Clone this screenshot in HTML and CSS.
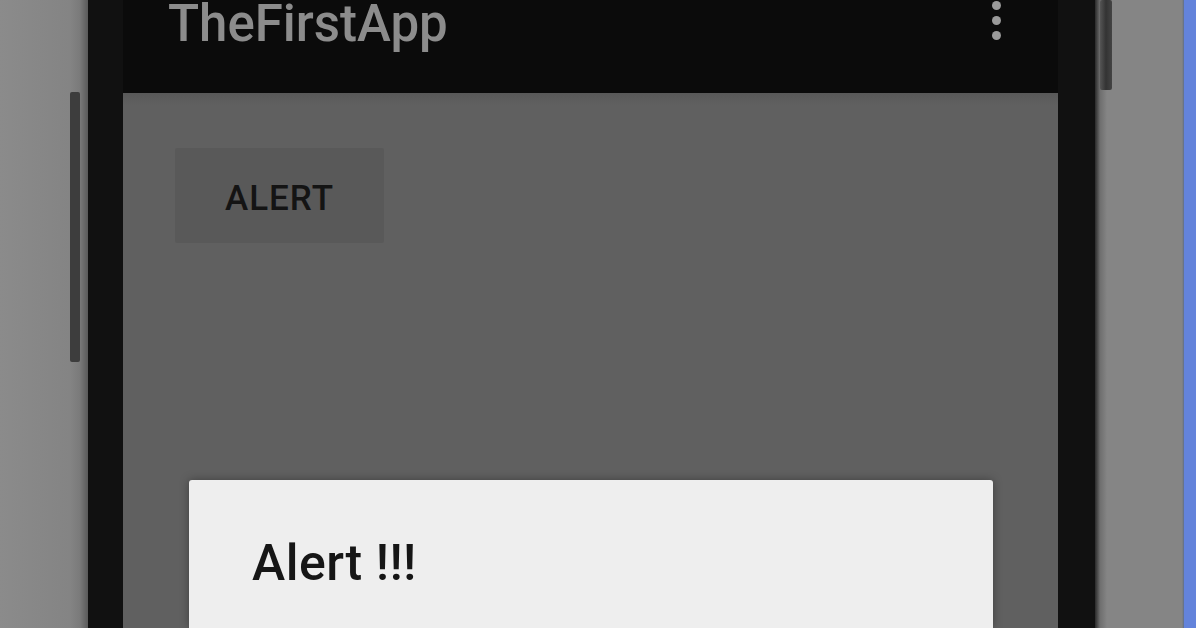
FILE: index.html
```html
<!DOCTYPE html>
<html>
	<head>
		<meta charset="UTF-8">
		<meta name=viewport content="width=device-width,initial-scale=1.0">
		<title>TheFirstApp</title>
		<link rel="stylesheet" href="styles.css">
	</head>
	<body>
		<div class="desk">
			<div class="side side-left">
				<div class="key key-left"></div>
			</div>
			<div class="phone">
				<header class="appbar">
					<div class="title">TheFirstApp</div>
					<div class="menu">
						<span></span>
						<span></span>
						<span></span>
					</div>
				</header>
				<main class="screen">
					<button class="btn">ALERT</button>
					<div class="dialog">
						<div class="dialog-title">Alert !!!</div>
					</div>
				</main>
			</div>
			<div class="side side-right">
				<div class="key key-right"></div>
			</div>
			<div class="edge"></div>
		</div>
	</body>
</html>
```

FILE: styles.css
```css
*{
	padding: 0;
	margin: 0;
	box-sizing: border-box;
}
html, body{
	width: 100%;
	height: 100%;
	overflow: hidden;
}
body{
	background: #898989;
	font-family: Roboto, "Liberation Sans", sans-serif;
}
.desk{
	display: flex;
	height: 628px;
}
.side{
	display: flex;
	background: #898989;
}
.side-left{
	width: 88px;
	justify-content: flex-end;
	padding-right: 8px;
	background: linear-gradient(to right, #8b8b8b 0, #848484 70px, #7a7a7a 80px, #5a5a5a 88px);
}
.key{
	background: #3d3d3d;
	border-radius: 2px;
}
.key-left{
	width: 10px;
	height: 270px;
	margin-top: 92px;
}
.side-right{
	width: 89px;
	padding-left: 5px;
	background: linear-gradient(to right, #2a2a2a 0, #6e6e6e 5px, #858585 12px, #858585 87px, #5c6d8a 89px);
}
.key-right{
	width: 12px;
	height: 90px;
	background: linear-gradient(to right, #555 0, #333 6px, #444 12px);
}
.edge{
	flex: 1;
	background: #6383db;
}
.phone{
	width: 1007px;
	background: #111111;
	padding: 0 37px 0 35px;
	display: flex;
	flex-direction: column;
}
.appbar{
	height: 93px;
	background: #0b0b0b;
	display: flex;
	align-items: flex-start;
	justify-content: space-between;
	padding: 0 57px 0 45px;
}
.title{
	font-size: 51px;
	line-height: 46px;
	margin-top: 1px;
	color: #8c8c8c;
	font-weight: 500;
}
.menu{
	display: flex;
	flex-direction: column;
	gap: 6px;
	margin-top: 1px;
}
.menu span{
	display: block;
	width: 9px;
	height: 9px;
	border-radius: 50%;
	background: #9a9a9a;
}
.screen{
	flex: 1;
	background: linear-gradient(to bottom, #595959 0, #606060 12px, #606060 100%);
	display: flex;
	flex-direction: column;
	align-items: flex-start;
	padding: 55px 65px 0 52px;
}
.btn{
	width: 209px;
	height: 95px;
	border: none;
	border-radius: 2px;
	background: #595959;
	color: #141414;
	font-family: Roboto, "Liberation Sans", sans-serif;
	font-size: 35px;
	font-weight: 500;
	letter-spacing: 1px;
	padding-top: 6px;
}
.dialog{
	align-self: stretch;
	margin: 237px 0 0 14px;
	flex: 1;
	background: #eeeeee;
	border-radius: 3px 3px 0 0;
	box-shadow: 0 0 10px rgba(0,0,0,0.35);
	padding: 55px 0 0 63px;
}
.dialog-title{
	font-size: 50px;
	line-height: 56px;
	font-weight: 500;
	letter-spacing: 0.5px;
	color: #161616;
}
```
